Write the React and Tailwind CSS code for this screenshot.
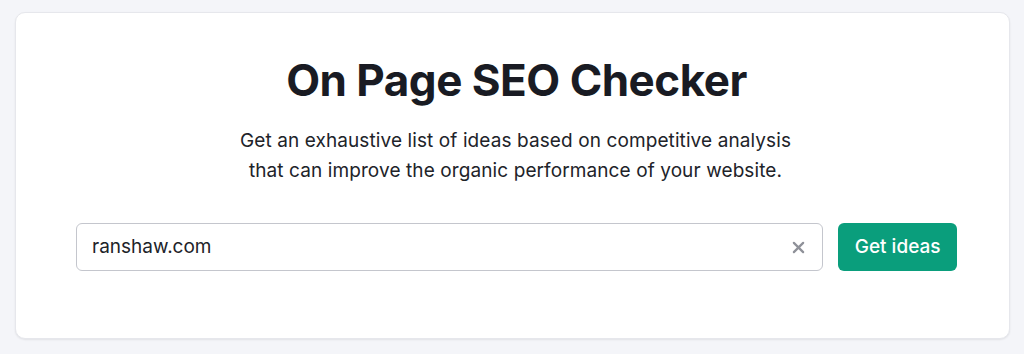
import React from "react";

export default function App() {
  return (
    <div className="w-[1024px] h-[354px] bg-[#f4f5f9] pt-[12px] pl-[15px] pr-[14px]" style={{ fontFamily: "Inter, 'Noto Sans', sans-serif" }}>
      <div className="h-[327px] bg-white rounded-[10px] border border-[#e6e7ec] shadow-[0_1px_2px_rgba(0,0,0,0.08)] flex flex-col items-center">
        <h1 className="mt-[41px] text-[44px] leading-[52px] font-bold text-[#191b23] tracking-[-0.5px] pl-[8px]">On Page SEO Checker</h1>
        <p className="mt-[20px] text-center text-[19px] leading-[30px] text-[#212329] tracking-[0.1px] pl-[6px]">
          Get an exhaustive list of ideas based on competitive analysis
          <br />
          that can improve the organic performance of your website.
        </p>
        <div className="mt-[37px] w-full flex items-center gap-[15px] pl-[60px] pr-[52px]">
          <div className="flex-1 h-[48px] rounded-[6px] border border-[#c4c6cd] flex items-center pl-[15px] pr-[17px]">
            <span className="flex-1 text-[19px] text-[#212329]">ranshaw.com</span>
            <svg width="13" height="13" viewBox="0 0 14 14" className="text-[#8f9199]">
              <path d="M2 2L12 12M12 2L2 12" stroke="currentColor" strokeWidth="2.4" strokeLinecap="round" />
            </svg>
          </div>
          <button className="h-[48px] px-[16.5px] rounded-[6px] bg-[#0a9e7c] text-white text-[19px] font-medium">Get ideas</button>
        </div>
      </div>
    </div>
  );
}
